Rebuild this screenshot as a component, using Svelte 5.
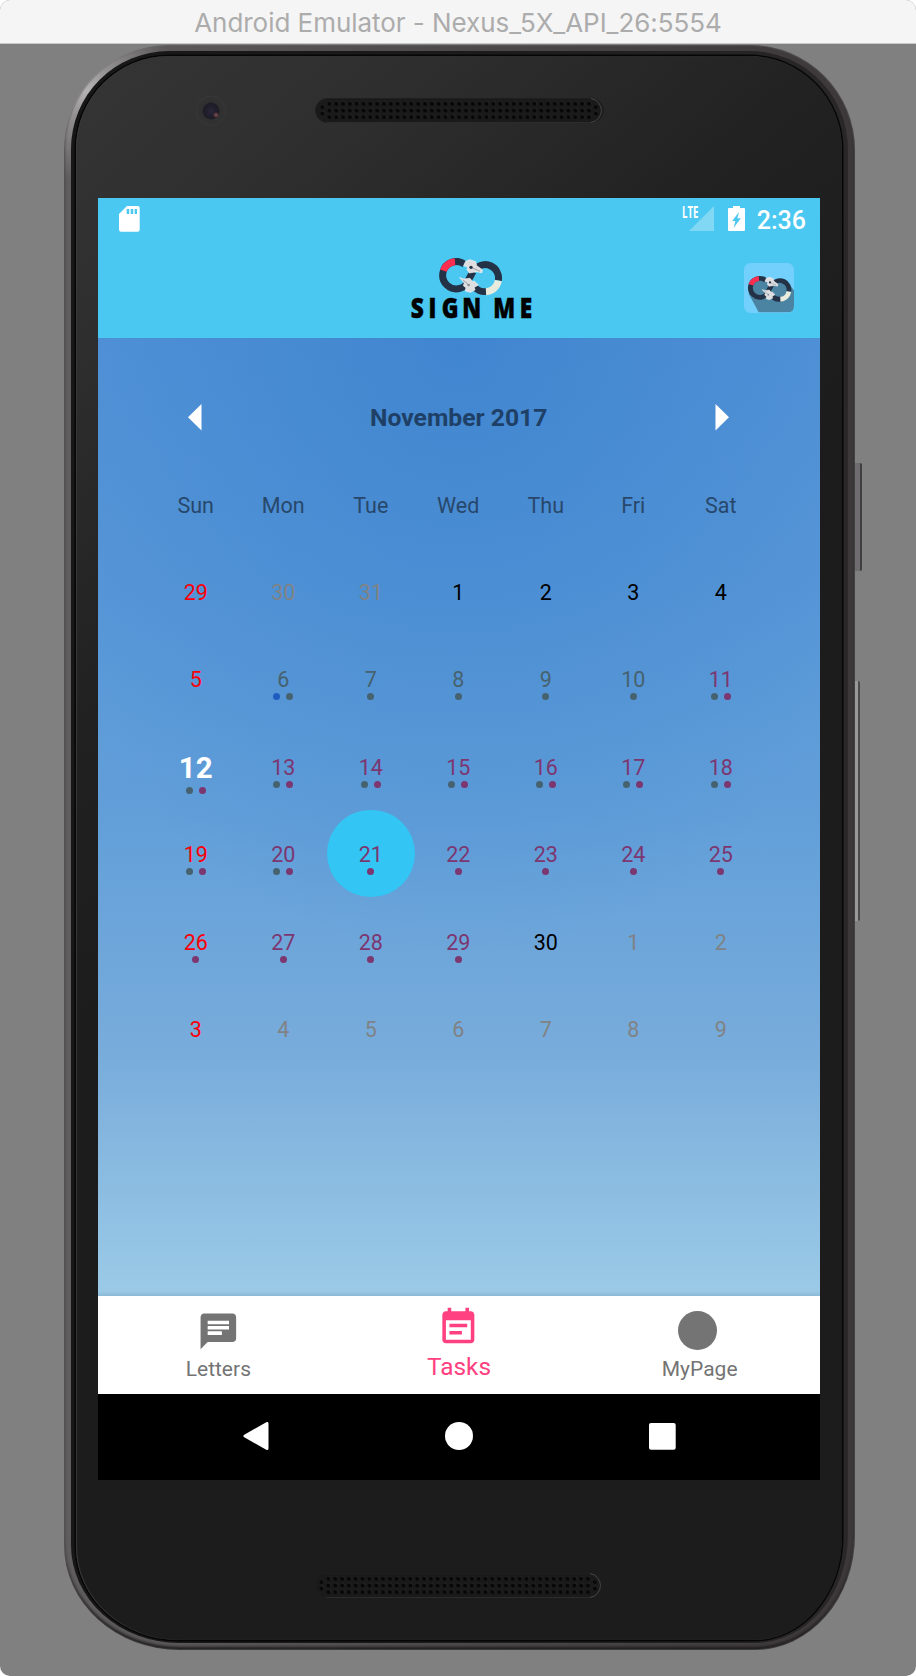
<script>
  const weekdays = ['Sun', 'Mon', 'Tue', 'Wed', 'Thu', 'Fri', 'Sat'];
  // Each day: [label, tone, dots]; dots: b = blue, g = slate, p = plum
  const weeks = [
    [['29', 'red', ''], ['30', 'muted', ''], ['31', 'muted', ''], ['1', 'ink', ''], ['2', 'ink', ''], ['3', 'ink', ''], ['4', 'ink', '']],
    [['5', 'red', ''], ['6', 'slate', 'bg'], ['7', 'slate', 'g'], ['8', 'slate', 'g'], ['9', 'slate', 'g'], ['10', 'slate', 'g'], ['11', 'plum', 'gp']],
    [['12', 'today', 'gp'], ['13', 'plum', 'gp'], ['14', 'plum', 'gp'], ['15', 'plum', 'gp'], ['16', 'plum', 'gp'], ['17', 'plum', 'gp'], ['18', 'plum', 'gp']],
    [['19', 'red', 'gp'], ['20', 'plum', 'gp'], ['21', 'plum selected', 'p'], ['22', 'plum', 'p'], ['23', 'plum', 'p'], ['24', 'plum', 'p'], ['25', 'plum', 'p']],
    [['26', 'red', 'p'], ['27', 'plum', 'p'], ['28', 'plum', 'p'], ['29', 'plum', 'p'], ['30', 'ink', ''], ['1', 'muted', ''], ['2', 'muted', '']],
    [['3', 'red', ''], ['4', 'muted', ''], ['5', 'muted', ''], ['6', 'muted', ''], ['7', 'muted', ''], ['8', 'muted', ''], ['9', 'muted', '']]
  ];
  const holes = [];
  for (let c = 0; c < 39; c++) for (let r = 0; r < 3; r++) holes.push([14.5 + c * 6.83, 5.8 + r * 6.6]);
  for (const x of [7.5, 281]) for (const y of [9, 15.5]) holes.push([x, y]);
</script>

{#snippet speaker()}
  <svg class="speaker" width="289" height="25" viewBox="0 0 289 25">
    <rect x=".5" y=".5" width="288" height="24" rx="12" fill="#1a1a1a" stroke="#1f1f1f" />
    <path d="M276 .6A12 12 0 0 1 276 24.4" fill="none" stroke="#484848" />
    <path d="M12 24.5H276" stroke="#2c2c2c" />
    {#each holes as [x, y]}
      <circle cx={x + 0.5} cy={y - 0.6} r="1.9" fill="#2b2b2b" />
      <circle cx={x} cy={y} r="2" fill="#080808" />
    {/each}
  </svg>
{/snippet}

{#snippet rings()}
  <g fill="none" stroke="#243247" stroke-width="21">
    <path d="M252 222A41 41 0 1 0 238 294Q258 290 264 268L277 244" />
    <path d="M284 236A40 40 0 0 1 353 270" />
    <path d="M320 303A40 40 0 0 1 278 285" />
    <path d="M188 241A41 41 0 0 1 223 214" stroke="#ff2d50" />
    <path d="M353 271A40 40 0 0 1 316 304" stroke="#e9ecdd" />
  </g>
  <g fill="#dedee1" stroke="#f4f4f5" stroke-width="2" stroke-linejoin="round">
    <path d="M255 213L268 208L285 214L288 226L305 238L304 247L287 244L266 248L259 238L262 230L249 226Z" />
    <path d="M237 262L250 266L268 264L276 274L281 272L293 284L281 291L283 299L269 306L254 302L256 292L248 286L251 278Z" />
  </g>
  <path d="M271 231L298 243M264 284L246 268" stroke="#7a7f89" stroke-width="2" />
  <circle cx="271" cy="231" r="5" fill="#243247" />
  <circle cx="264" cy="284" r="4" fill="#8b8f98" />
{/snippet}

<div class="window">
  <header class="titlebar">Android Emulator - Nexus_5X_API_26:5554</header>
  <div class="desk">
    <div class="device">
      <i class="key power"></i>
      <i class="key volume"></i>
      <div class="rim">
        <div class="glass">
          <div class="brow">
            <span class="camera"></span>
            {@render speaker()}
          </div>

          <main class="screen">
            <div class="appbar">
              <div class="status">
                <svg class="sd" width="21" height="26" viewBox="0 0 21 26">
                  <path fill="#fff" fill-rule="evenodd" d="M8 0H18.7A2 2 0 0 1 20.7 2V23.7A2 2 0 0 1 18.7 25.7H2A2 2 0 0 1 0 23.7V8ZM7.7 3V8H10.2V3ZM11.7 3V8H14.2V3ZM15.6 3V8H18V3Z" />
                </svg>
                <svg class="signal" width="33" height="26" viewBox="0 0 33 26">
                  <path d="M32 0V25H7Z" fill="#fff" fill-opacity=".3" />
                  <text x="0" y="12" textLength="16.5" lengthAdjust="spacingAndGlyphs">LTE</text>
                </svg>
                <svg class="battery" width="17" height="26" viewBox="0 0 17 26">
                  <path fill="#fff" fill-rule="evenodd" d="M5 0H12V2H16A1 1 0 0 1 17 3V24A1 1 0 0 1 16 25H1A1 1 0 0 1 0 24V3A1 1 0 0 1 1 2H5ZM11 6L4.2 15H7.4L5.6 22L12.8 12.2H9.4Z" />
                </svg>
                <time>2:36</time>
              </div>
              <div class="brand">
                <svg class="mark" width="63.3" height="38" viewBox="175 203 190 114">{@render rings()}</svg>
                <svg class="name" width="126" height="24" viewBox="0 0 126 24">
                  <text transform="scale(.8 1)" x="-0.3 21.9 38.5 64 85 102.8 135.8" y="21.2">SIGN ME</text>
                </svg>
              </div>
              <svg class="avatar" width="50" height="50" viewBox="0 0 150 150">
                <rect width="150" height="150" rx="20" fill="#73cffb" />
                <path d="M14 92L44 148H130Q150 148 150 128V82L132 60L60 50Z" fill="#4a84a2" />
                <circle cx="44" cy="74" r="22" fill="#4a84a2" />
                <g transform="translate(-109 -101) scale(.69)">{@render rings()}</g>
              </svg>
            </div>

            <section class="sky">
              <div class="calendar">
                <div class="month">
                  <svg width="14" height="27" viewBox="0 0 14 27"><path d="M13.5 0V26.5L0 13.2Z" fill="#fff" /></svg>
                  <h1>November 2017</h1>
                  <svg width="14" height="27" viewBox="0 0 14 27"><path d="M.5 0V26.5L14 13.2Z" fill="#fff" /></svg>
                </div>
                <div class="week names">
                  {#each weekdays as name}<span>{name}</span>{/each}
                </div>
                {#each weeks as week}
                  <div class="week">
                    {#each week as [label, tone, dots]}
                      <div class="day {tone}">
                        <b>{label}</b>
                        <span class="dots">{#each dots as d}<i class={d}></i>{/each}</span>
                      </div>
                    {/each}
                  </div>
                {/each}
              </div>
            </section>

            <nav class="tabs">
              <div class="tab">
                <svg width="42.7" height="42.7" viewBox="0 0 24 24"><path fill="#747474" d="M20 2H4c-1.1 0-1.99.9-1.99 2L2 22l4-4h14c1.1 0 2-.9 2-2V4c0-1.1-.9-2-2-2zM6 9h12v2H6V9zm8 5H6v-2h8v2zm4-6H6V6h12v2z" /></svg>
                <span>Letters</span>
              </div>
              <div class="tab active">
                <svg width="42.7" height="42.7" viewBox="0 0 24 24"><path fill="#ff4081" d="M17 10H7v2h10v-2zm2-7h-1V1h-2v2H8V1H6v2H5c-1.11 0-1.99.9-1.99 2L3 19c0 1.1.89 2 2 2h14c1.1 0 2-.9 2-2V5c0-1.1-.9-2-2-2zm0 16H5V8h14v11zm-5-5H7v2h7v-2z" /></svg>
                <span>Tasks</span>
              </div>
              <div class="tab me">
                <i></i>
                <span>MyPage</span>
              </div>
            </nav>

            <div class="softkeys">
              <svg width="26" height="28" viewBox="0 0 26 28"><path d="M24 1.5V26.5L2 14Z" fill="#fff" stroke="#fff" stroke-width="3" stroke-linejoin="round" /></svg>
              <svg width="28" height="28" viewBox="0 0 28 28"><circle cx="14" cy="14" r="14" fill="#fff" /></svg>
              <svg width="27" height="27" viewBox="0 0 27 27"><rect width="26.7" height="26.7" rx="2" fill="#fff" /></svg>
            </div>
          </main>

          <div class="chin">{@render speaker()}</div>
        </div>
      </div>
    </div>
  </div>
</div>

<style>
  :global(body) { background: #fff; }
  svg { display: block; flex: none; }
  i { display: block; }

  .window {
    width: 916px; height: 1676px; box-sizing: border-box;
    display: flex; flex-direction: column;
    border-radius: 10px; overflow: hidden; background: #808080;
    font-family: Roboto, sans-serif;
  }
  .titlebar {
    height: 44px; box-sizing: border-box; flex: none;
    background: #f5f5f5; border-bottom: 1px solid #c9c9c9;
    text-align: center; color: #acacac;
    font: 400 26px/46px Inter, sans-serif; letter-spacing: -.04px; white-space: nowrap;
  }
  .desk { padding: 1px 61px 0 64px; }

  .device {
    position: relative; box-sizing: border-box; width: 791px; height: 1605px; padding: 6px 7px 7px;
    border-radius: 105px 105px 100px 115px / 105px 105px 115px 105px;
    background:
      radial-gradient(circle at 22px 45px, #b5b3b4 0, rgba(160, 158, 159, .8) 28px, rgba(120, 118, 119, 0) 90px),
      linear-gradient(90deg, #5f5d5e 0, #4c494a 50%, #3c3839 100%);
    box-shadow: inset 0 0 1px 1px rgba(110, 108, 109, .4), inset 0 -3px 3px #1d1b1c;
  }
  .key { position: absolute; box-sizing: border-box; left: 791px; }
  .power { top: 418px; width: 7px; height: 108px; background: #6e6c6e; border-right: 2px solid #3f3f3f; border-radius: 0 2px 2px 0; }
  .volume { top: 636px; width: 5px; height: 240px; background: #999; border-right: 2px solid #4b4b4b; border-radius: 0 2px 2px 0; }
  .rim {
    height: 100%; box-sizing: border-box; padding: 5px 6px 3px 5px;
    border-radius: 98px 98px 93px 108px / 98px 98px 108px 98px;
    background: linear-gradient(90deg, #171717 0, #1c1b1b 50%, #292728 100%);
  }
  .glass {
    height: 100%; box-sizing: border-box; padding: 0 23px 0 22px;
    display: flex; flex-direction: column;
    border-radius: 93px 93px 88px 103px / 93px 93px 103px 93px;
    background: linear-gradient(140deg, #353536 0, #2f2f30 12%, #212122 30%, #1c1c1d 45%);
    box-shadow: inset 1px 0 1px #3a3a3a, 0 0 0 1.5px #060606;
  }
  .brow { height: 142px; flex: none; display: flex; align-items: flex-start; padding: 42px 0 0 98px; box-sizing: border-box; gap: 89px; }
  .camera {
    flex: none; width: 30px; height: 30px; margin-top: -2px; border-radius: 50%;
    background:
      radial-gradient(circle at 20px 19px, #7d4c4c 0, #5c3a40 1.5px, transparent 3px),
      radial-gradient(circle, #29263a 0, #1d1b25 7.5px, #303031 9px, #323233 14px, #3b3b3b 15px);
  }
  .chin { display: flex; justify-content: center; padding-top: 93px; }

  .screen { width: 722px; height: 1282px; flex: none; display: flex; flex-direction: column; background: #000; }
  .appbar { height: 140px; flex: none; background: #4bc8f1; display: grid; grid-template: 42px 98px / 1fr auto; }
  .status { grid-column: 1 / 3; display: flex; align-items: flex-start; padding: 8px 14px 0 21px; color: #fff; }
  .signal { margin-left: auto; overflow: visible; }
  .signal text { font: 700 16px "Open Sans", sans-serif; fill: #fff; }
  .battery { margin-left: 13px; }
  time { margin-left: 12px; font-weight: 500; font-size: 25px; line-height: 30px; }
  .brand { padding: 18px 0 0 313px; }
  .mark { margin-left: 27.5px; }
  .name { margin-top: 1px; overflow: visible; }
  .name text { font: 800 28.3px "Open Sans", sans-serif; fill: #000; stroke: #000; stroke-width: .5; white-space: pre; }
  .avatar { margin: 22.5px 26px 0 0; }

  .sky {
    height: 958px; flex: none; padding: 35px 0 0 54px; box-sizing: border-box;
    background:
      radial-gradient(ellipse 480px 620px at 50% 0, rgba(45, 120, 200, .5), rgba(60, 130, 205, 0)),
      linear-gradient(180deg, #5393d7 0, #5897d8 25%, #629fd9 50%, #78acdb 75%, #8bbce1 88%, #9bcae7 99.5%, #8bb9d6 100%);
  }
  .calendar { width: 612.5px; }
  .month { height: 87.4px; display: flex; align-items: center; justify-content: space-between; padding: 2px 35px 0 36px; box-sizing: border-box; }
  h1 { margin: 1px 0 0; font-size: 24.7px; font-weight: 700; color: #1f4066; line-height: 30px; }
  .week { height: 87.4px; display: grid; grid-template-columns: repeat(7, 87.5px); }
  .names { color: #27476b; font-size: 21.5px; text-align: center; line-height: 92px; }
  .day { display: flex; flex-direction: column; align-items: center; padding-top: 32.2px; box-sizing: border-box; height: 87.5px; }
  .day b { font-weight: 400; font-size: 21.5px; line-height: 26px; }
  .dots { display: flex; gap: 6.3px; }
  .dots i { width: 7px; height: 7px; border-radius: 50%; }
  .g { background: #46626f; }
  .p { background: #7c3670; }
  .b { background: #1f5cc0; }
  .red { color: #fb0008; }
  .muted { color: #808385; }
  .ink { color: #000; }
  .slate { color: #46626f; }
  .plum { color: #7c3670; }
  .selected { background: #33c5f4; border-radius: 50%; }
  .today { color: #fff; padding-top: 27px; }
  .today b { font-weight: 700; font-size: 29.5px; line-height: 36px; margin-bottom: 1px; }

  .tabs { height: 98px; flex: none; background: #fff; display: grid; grid-template-columns: repeat(3, 1fr); color: #747474; }
  .tab { display: flex; flex-direction: column; align-items: center; padding-top: 13.5px; }
  .tab span { font-size: 21px; line-height: 26px; margin-top: 4px; }
  .active { padding-top: 10px; color: #ff4081; }
  .active svg { margin-left: -2px; }
  .active span { font-size: 24.4px; line-height: 30px; margin-top: 3px; }
  .me i { width: 39.5px; height: 39.5px; border-radius: 50%; background: #747474; margin: 1px 4px 2.2px 0; }

  .softkeys { height: 86px; flex: none; background: #000; display: flex; align-items: center; justify-content: space-between; padding: 0 144px 2px 145px; box-sizing: border-box; }
</style>
